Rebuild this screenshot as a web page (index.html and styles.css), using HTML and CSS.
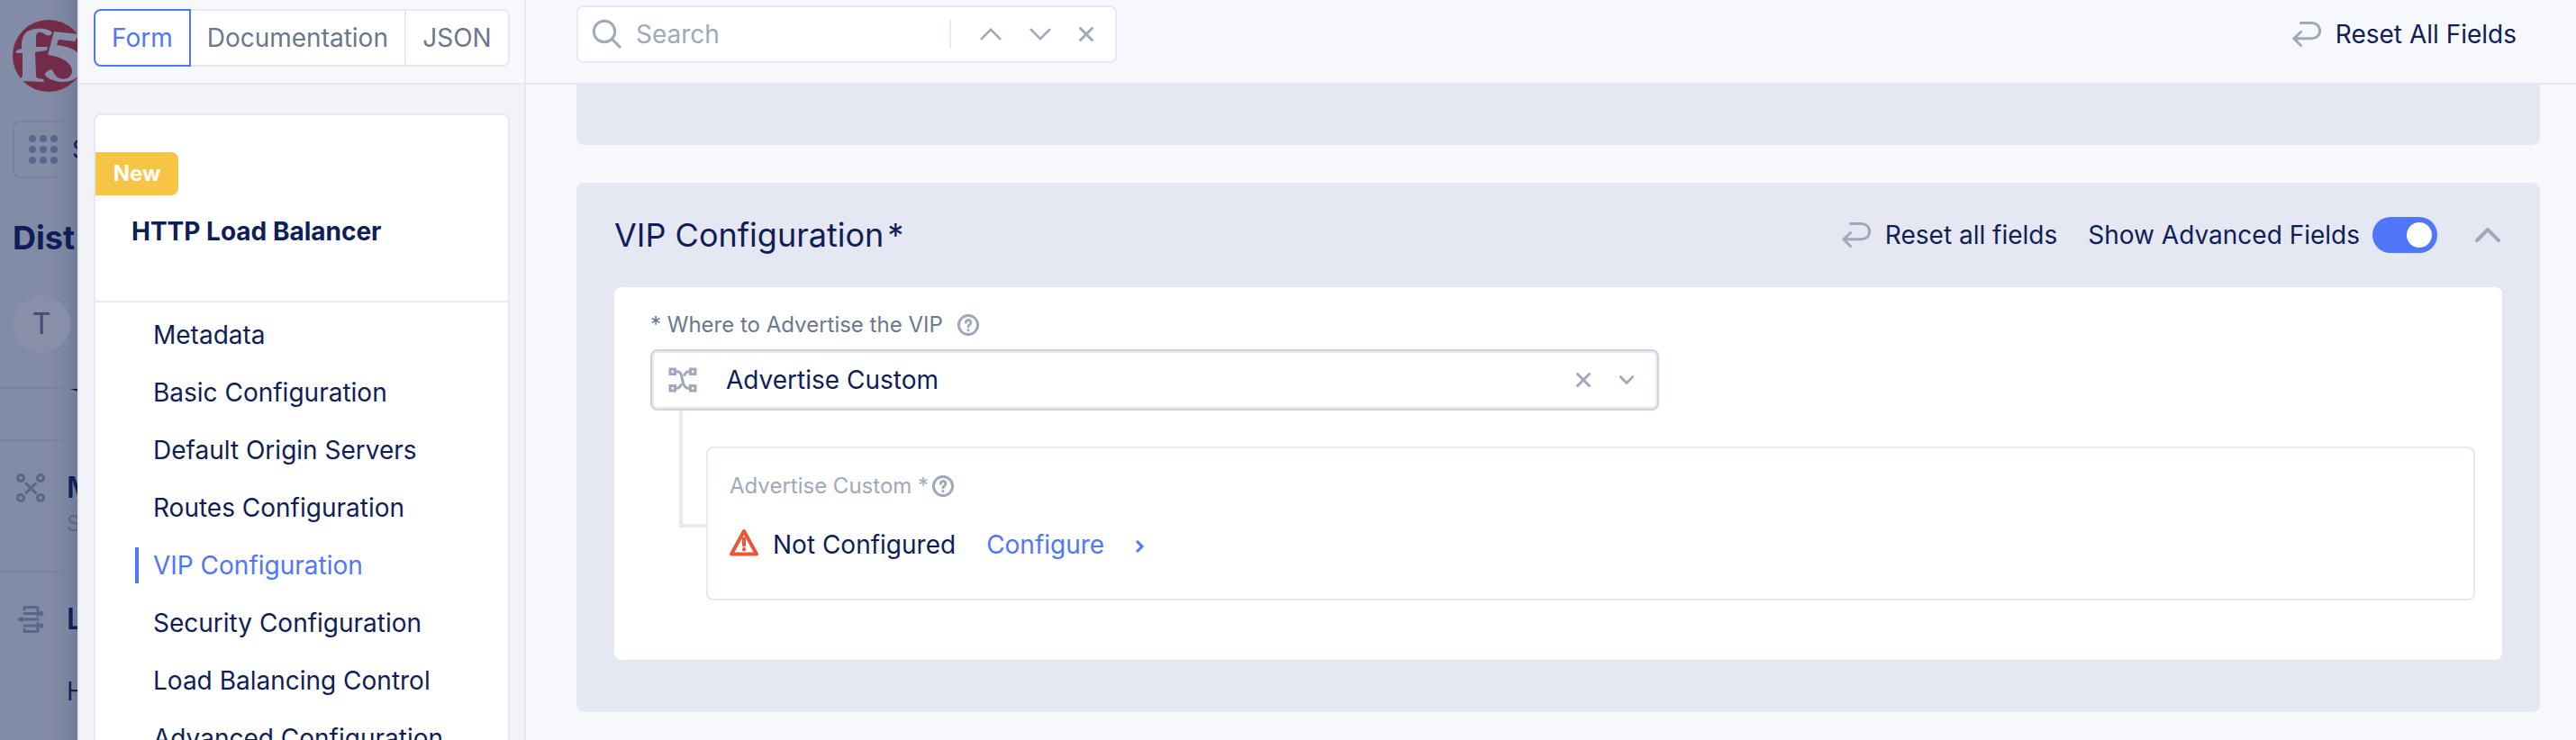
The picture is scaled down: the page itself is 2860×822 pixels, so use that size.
FILE: index.html
```html
<!DOCTYPE html>
<html lang="en">
<head>
<meta charset="utf-8">
<title>HTTP Load Balancer</title>
<link rel="stylesheet" href="styles.css">
</head>
<body>
<svg class="sprite" aria-hidden="true">
  <symbol id="reset" viewBox="0 0 32 28"><path d="M9.500 1.500H22a8.500 8.500 0 0 1 0 17.300H2M9.500 11.500L1.800 18.800L9.500 26.500"/></symbol>
  <symbol id="up" viewBox="0 0 28 16"><path d="M2 14L14 2L26 14"/></symbol>
  <symbol id="down" viewBox="0 0 28 16"><path d="M2 2L14 14L26 2"/></symbol>
  <symbol id="close" viewBox="0 0 16 16"><path d="M1.500 1.500L14.500 14.500M14.500 1.500L1.500 14.500"/></symbol>
  <symbol id="help" viewBox="0 0 24 24"><circle cx="12" cy="12" r="10.600"/><path d="M9.300 9.200a2.800 2.800 0 1 1 4.200 2.500c-1 .600-1.500 1-1.500 2.100"/><path d="M12 17.500v.300"/></symbol>
</svg>
<div class="app">
  <div class="backdrop">
    <svg class="logo" viewBox="0 0 80 80" role="img" aria-label="f5">
      <circle cx="40" cy="40" r="40" class="logo-disc"/>
      <path class="logo-mark" d="M44 14C38 8 21 9 15 14C10 19 10 25 10 32L4 34V37L11 37V60C11 63 10 65 7 65L11 68L35 69L34 66L28 65C26 64 26 63 26 60L25 36L38 34L39 30H26V18C27 12 33 13 37 17C41 18 43 17 44 14Z"/>
      <path class="logo-mark" d="M46 13L74 16L69 24L51 22L49 28C66 30 76 36 78 47C79 60 70 70 54 69C44 68 37 64 36 61C36 58 40 56 43 55C46 58 47 63 52 65C58 67 65 65 66 58C66 47 54 41 39 39Z"/>
    </svg>
    <div class="picker">
      <svg viewBox="0 0 32 32"><g><circle cx="4" cy="4" r="4"/><circle cx="16" cy="4" r="4"/><circle cx="28" cy="4" r="4"/><circle cx="4" cy="16" r="4"/><circle cx="16" cy="16" r="4"/><circle cx="28" cy="16" r="4"/><circle cx="4" cy="28" r="4"/><circle cx="16" cy="28" r="4"/><circle cx="28" cy="28" r="4"/></g></svg>
      <span>S</span>
    </div>
    <div class="product">Dist</div>
    <div class="avatar">T</div>
    <div class="pinned"><svg viewBox="0 0 14 4"><path d="M0 0H14V3C8 3 5 2 0 0Z"/></svg></div>
    <div class="group group-manage">
      <svg class="line-icon" viewBox="0 0 32 32"><circle cx="5" cy="5" r="3.500"/><circle cx="27" cy="5" r="3.500"/><circle cx="5" cy="27" r="3.500"/><circle cx="27" cy="27" r="3.500"/><path d="M11 11L21.500 21.500M21.500 11L11 21.500"/></svg>
      <div><b>M</b><small>S</small></div>
    </div>
    <div class="group group-load">
      <svg class="line-icon" viewBox="0 0 32 32"><path d="M9 5V2.500H24V8M24 24V29.500H9V27M9 9.500H29M24 9.500V12M3 16H24M6 14.500V17.500M9 23H29M24 20V23M28 8V11M28 21.500V24.500"/></svg>
      <div><b>L</b><span>H</span></div>
    </div>
  </div>
  <div class="drawer">
    <aside class="side">
      <div class="side-top">
        <div class="tabs">
          <button class="tab tab-on">Form</button>
          <button class="tab">Documentation</button>
          <button class="tab">JSON</button>
        </div>
      </div>
      <div class="side-body">
        <div class="card">
          <div class="card-head">
            <span class="badge">New</span>
            <h1>HTTP Load Balancer</h1>
          </div>
          <nav>
            <a href="#metadata">Metadata</a>
            <a href="#basic">Basic Configuration</a>
            <a href="#origin">Default Origin Servers</a>
            <a href="#routes">Routes Configuration</a>
            <a href="#vip" class="current">VIP Configuration</a>
            <a href="#security">Security Configuration</a>
            <a href="#control">Load Balancing Control</a>
            <a href="#advanced">Advanced Configuration</a>
          </nav>
        </div>
      </div>
    </aside>
    <main>
      <header class="bar">
        <div class="search">
          <svg class="lens" viewBox="0 0 32 32"><circle cx="13" cy="13" r="11.700"/><path d="M21.500 21.500L31 31"/></svg>
          <input type="text" placeholder="Search" aria-label="Search">
          <div class="search-tools">
            <button aria-label="Previous"><svg class="ico chev"><use href="#up"/></svg></button>
            <button aria-label="Next"><svg class="ico chev"><use href="#down"/></svg></button>
            <button aria-label="Clear search"><svg class="ico cross"><use href="#close"/></svg></button>
          </div>
        </div>
        <button class="reset"><svg class="ico ret"><use href="#reset"/></svg>Reset All Fields</button>
      </header>
      <div class="content">
        <section class="panel panel-prev"></section>
        <section class="panel" id="vip">
          <div class="panel-head">
            <h2>VIP Configuration<span>*</span></h2>
            <div class="actions">
              <button class="reset"><svg class="ico ret"><use href="#reset"/></svg>Reset all fields</button>
              <label class="advanced" for="adv">Show Advanced Fields <input type="checkbox" id="adv" class="switch" checked></label>
              <button aria-label="Collapse"><svg class="ico fold"><use href="#up"/></svg></button>
            </div>
          </div>
          <div class="panel-body">
            <div class="field-label"><label for="where">* Where to Advertise the VIP</label><svg class="ico help"><use href="#help"/></svg></div>
            <div class="choice">
              <svg class="ico net" viewBox="0 0 32 28"><path d="M2 2h5.500v5.500h-5.500zM24.500 2h5.500v5.500h-5.500zM2 20.500h5.500v5.500h-5.500zM24.500 20.500h5.500v5.500h-5.500zM8 4.500C14 4.500 14.500 8 15.500 13C16.500 19 17.500 23.500 24 23.500M24 4.500C20.500 4.500 19 6 18 8.500M8 23.500C11.500 23.500 13 22 14 19.500"/></svg>
              <select id="where"><option>Advertise Custom</option></select>
              <button aria-label="Clear"><svg class="ico cross"><use href="#close"/></svg></button>
              <svg class="ico mini"><use href="#down"/></svg>
            </div>
            <div class="branch">
              <div class="elbow"></div>
              <div class="nested">
                <div class="nested-label">Advertise Custom *<svg class="ico help"><use href="#help"/></svg></div>
                <div class="status">
                  <svg class="warn" viewBox="0 0 32 30"><path d="M16 3L30 28.500H2Z"/><path d="M16 11.500V18.500M16 23V23.400"/></svg>
                  <span>Not Configured</span>
                  <a href="#configure">Configure<svg class="go" viewBox="0 0 10 16"><path d="M2 2L8 8L2 14"/></svg></a>
                </div>
              </div>
            </div>
          </div>
        </section>
      </div>
    </main>
  </div>
</div>
</body>
</html>
```
FILE: styles.css
```css
* { box-sizing: border-box; }
:root {
  --ink: #0f1e57;
  --blue: #5076fa;
  --line: #e6e9f3;
  --panel: #e5e8f2;
  --gray: #a0a8b9;
  --muted: #6c778e;
  --page: #f7f8fb;
}
body {
  margin: 0;
  font: 28px/40px Inter, "Liberation Sans", sans-serif;
  color: var(--ink);
  background: var(--page);
}
button {
  font: inherit;
  color: inherit;
  background: none;
  border: 0;
  padding: 0;
  display: flex;
  align-items: center;
}
a { color: inherit; text-decoration: none; }
h1, h2 { margin: 0; }
svg { flex: none; display: block; overflow: visible; }
.sprite { position: absolute; width: 0; height: 0; }

.app { display: flex; height: 100vh; overflow: hidden; }

/* Dimmed page behind the drawer */
.backdrop {
  width: 86px;
  flex: none;
  overflow: hidden;
  background: linear-gradient(90deg, #848da8 0%, #828aa6 65%, #7b849f 88%, #727b96 100%);
}
.logo { width: 80px; height: 80px; margin: 22px 0 0 14px; }
.logo-disc { fill: #722b48; }
.logo-mark { fill: #868ea9; }
.picker {
  display: flex;
  align-items: center;
  gap: 16px;
  width: 200px;
  height: 64px;
  margin: 32px 0 0 14px;
  padding-left: 16px;
  border: 2px solid #7881a2;
  border-radius: 8px;
}
.picker svg { width: 32px; fill: #5a658a; }
.product { margin: 44px 0 0 14px; font-size: 36px; line-height: 44px; font-weight: 700; }
.avatar {
  width: 64px;
  height: 64px;
  margin: 42px 0 0 14px;
  border-radius: 50%;
  background: #888fa9;
  color: #414d75;
  font-size: 32px;
  line-height: 64px;
  text-align: center;
}
.pinned { height: 58px; margin-top: 38px; border-top: 2px solid #7881a2; }
.pinned svg { width: 14px; height: 4px; margin-left: 78px; fill: var(--ink); }
.group { display: flex; gap: 24px; padding-left: 18px; border-top: 2px solid #7881a2; }
.group div { display: flex; flex-direction: column; }
.group b { font-size: 32px; font-weight: 600; line-height: 40px; }
.group small { font-size: 24px; line-height: 40px; color: #5a658a; }
.group-manage { height: 146px; padding-top: 32px; }
.group-manage svg { margin-top: 4px; }
.group-load { padding-top: 32px; }
.group-load svg { margin-top: 4px; }
.group-load span { margin-top: 40px; }
.line-icon { width: 32px; height: 32px; fill: none; stroke: #5a658a; stroke-width: 3; stroke-linecap: round; stroke-linejoin: round; }

/* Drawer */
.drawer { flex: 1; min-width: 0; display: flex; border-left: 2px solid var(--line); }
.side { width: 496px; flex: none; display: flex; flex-direction: column; border-right: 2px solid var(--line); }
.side-top { padding: 10px 16px 18px; border-bottom: 2px solid var(--line); }
.tabs { display: flex; height: 64px; }
.tab {
  flex: none;
  justify-content: center;
  padding: 0 18px;
  background: #fff;
  border: 2px solid var(--line);
  border-left: 0;
  color: var(--muted);
}
.tab:last-child { flex: 1; border-radius: 0 8px 8px 0; }
.tab-on { border: 2px solid var(--blue); border-radius: 8px 0 0 8px; color: var(--blue); }
.side-body { flex: 1; min-height: 0; padding: 32px 16px 0; background: #f2f3f9; }
.card { border: 2px solid var(--line); border-radius: 8px; background: #fff; }
.card-head { padding: 41px 0 57px; border-bottom: 2px solid var(--line); }
.badge {
  display: block;
  width: 92px;
  height: 48px;
  border-radius: 0 8px 8px 0;
  background: #f7c445;
  color: #fff;
  font-size: 24px;
  line-height: 48px;
  font-weight: 700;
  text-align: center;
}
h1 { margin: 20px 0 0 40px; font-size: 28px; font-weight: 700; line-height: 40px; }
nav { padding: 4px 0 0 44px; }
nav a { display: block; height: 40px; margin: 12px 0 24px; padding-left: 16px; border-left: 4px solid transparent; }
nav .current { border-color: var(--blue); color: var(--blue); }

/* Main column */
main { flex: 1; min-width: 0; display: flex; flex-direction: column; }
.bar {
  display: flex;
  justify-content: space-between;
  align-items: center;
  padding: 6px 66px 22px 56px;
  border-bottom: 2px solid var(--line);
}
.search {
  display: flex;
  align-items: center;
  width: 600px;
  height: 64px;
  padding: 0 24px 0 16px;
  background: #fff;
  border: 2px solid var(--line);
  border-radius: 8px;
}
.lens { width: 32px; height: 32px; fill: none; stroke: var(--gray); stroke-width: 3; }
.search input { flex: 1; min-width: 0; padding: 0 0 0 16px; border: 0; outline: 0; font: inherit; background: none; }
.search input::placeholder { color: var(--gray); opacity: 1; }
.search-tools { display: flex; align-items: center; gap: 31px; height: 32px; padding-left: 32px; border-left: 2px solid var(--line); }
.ico { fill: none; stroke: var(--gray); stroke-width: 3; stroke-linecap: round; }
.chev { width: 24px; height: 14px; }
.cross { width: 16px; height: 16px; }
.ret { width: 32px; height: 28px; }
.fold { width: 28px; height: 16px; stroke-width: 4; }
.mini { width: 16px; height: 10px; stroke-width: 5; }
.help { width: 24px; height: 24px; stroke-width: 3; }
.reset { gap: 16px; }

.content { padding: 0 40px 31px 56px; }
.panel { background: var(--panel); border-radius: 8px; padding: 0 42px 58px; margin-bottom: 42px; }
.panel-prev { height: 67px; border-radius: 0 0 8px 8px; padding: 0; }
.panel-head { display: flex; justify-content: space-between; align-items: center; height: 116px; }
h2 { font-size: 36px; font-weight: 400; line-height: 44px; }
h2 span { margin-left: 4px; }
.actions { display: flex; align-items: center; padding-right: 2px; }
.advanced { display: flex; align-items: center; gap: 14px; margin: 0 42px 0 34px; }
.switch {
  appearance: none;
  width: 72px;
  height: 40px;
  margin: 0;
  padding: 6px;
  display: flex;
  justify-content: flex-end;
  border-radius: 20px;
  background: var(--blue);
}
.switch::before { content: ""; width: 28px; height: 28px; border-radius: 50%; background: #fff; }
.panel-body { background: #fff; border-radius: 8px; padding: 22px 30px 66px 40px; }
.field-label { display: flex; align-items: center; gap: 16px; height: 40px; margin-bottom: 7px; font-size: 24px; color: var(--muted); }
.choice {
  display: flex;
  align-items: center;
  width: 1120px;
  height: 68px;
  padding: 0 26px 0 18px;
  border: 2px solid #ced3e1;
  box-shadow: inset 0 0 0 2px var(--line);
  border-radius: 8px;
}
.net { width: 32px; height: 28px; }
select { appearance: none; flex: 1; border: 0; outline: 0; padding: 0; margin-left: 32px; font: inherit; color: inherit; background: none; }
.choice .mini { margin-left: 32px; }
.branch { display: flex; padding-left: 32px; }
.elbow { width: 30px; height: 130px; border-left: 4px solid var(--line); border-bottom: 4px solid var(--line); }
.nested { flex: 1; height: 171px; margin-top: 40px; padding: 22px 24px; border: 2px solid var(--line); border-radius: 8px; }
.nested-label { display: flex; align-items: center; gap: 4px; font-size: 24px; color: var(--gray); }
.status { display: flex; align-items: center; margin-top: 25px; }
.warn { width: 32px; height: 30px; margin: 0 16px 6px 0; fill: none; stroke: #e9573a; stroke-width: 4; stroke-linejoin: round; stroke-linecap: round; }
.status a { display: flex; align-items: center; margin-left: 34px; color: var(--blue); }
.go { width: 10px; height: 16px; margin: 4px 0 0 34px; fill: none; stroke: var(--blue); stroke-width: 3; }
```
